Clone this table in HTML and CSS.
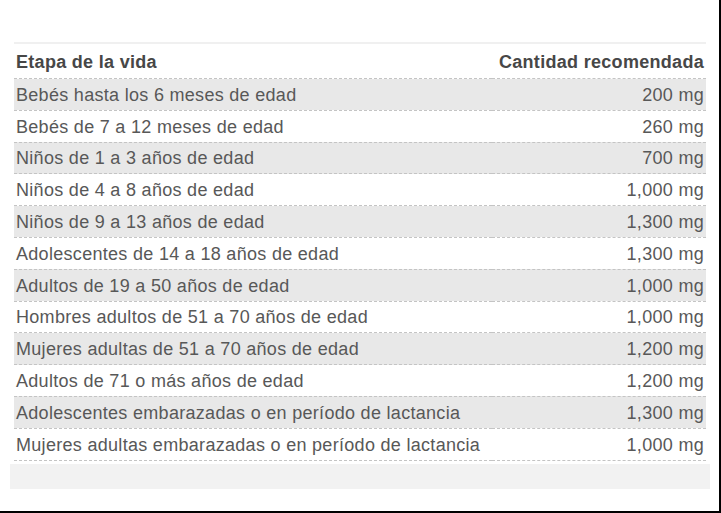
FILE: index.html
```html
<!DOCTYPE html>
<html lang="es">
<head>
<meta charset="utf-8">
<title>Cantidad recomendada</title>
<link rel="stylesheet" href="styles.css">
</head>
<body>
<div class="frame">
  <div class="content">
    <table class="intake">
      <thead>
        <tr><th class="stage">Etapa de la vida</th><th class="amount">Cantidad recomendada</th></tr>
      </thead>
      <tbody>
        <tr><td>Bebés hasta los 6 meses de edad</td><td class="amount">200 mg</td></tr>
        <tr><td>Bebés de 7 a 12 meses de edad</td><td class="amount">260 mg</td></tr>
        <tr><td>Niños de 1 a 3 años de edad</td><td class="amount">700 mg</td></tr>
        <tr><td>Niños de 4 a 8 años de edad</td><td class="amount">1,000 mg</td></tr>
        <tr><td>Niños de 9 a 13 años de edad</td><td class="amount">1,300 mg</td></tr>
        <tr><td>Adolescentes de 14 a 18 años de edad</td><td class="amount">1,300 mg</td></tr>
        <tr><td>Adultos de 19 a 50 años de edad</td><td class="amount">1,000 mg</td></tr>
        <tr><td>Hombres adultos de 51 a 70 años de edad</td><td class="amount">1,000 mg</td></tr>
        <tr><td>Mujeres adultas de 51 a 70 años de edad</td><td class="amount">1,200 mg</td></tr>
        <tr><td>Adultos de 71 o más años de edad</td><td class="amount">1,200 mg</td></tr>
        <tr><td>Adolescentes embarazadas o en período de lactancia</td><td class="amount">1,300 mg</td></tr>
        <tr><td>Mujeres adultas embarazadas o en período de lactancia</td><td class="amount">1,000 mg</td></tr>
      </tbody>
    </table>
    <div class="footer"></div>
  </div>
</div>
</body>
</html>
```
FILE: styles.css
```css
html, body {
  margin: 0;
  padding: 0;
  background: #ffffff;
}
.frame {
  width: 721px;
  height: 513px;
  box-sizing: border-box;
  border-right: 2px solid #000;
  border-bottom: 2px solid #000;
  overflow: hidden;
}
.content {
  padding: 42px 0 0 10px;
  width: 700px;
}
.intake {
  margin: 0 4px;
  width: 692px;
  border-collapse: collapse;
  border-top: 2px solid #f0f0f0;
  font-family: "Liberation Sans", Arial, sans-serif;
  font-size: 18px;
  letter-spacing: 0.3px;
  color: #585858;
}
.intake th {
  font-weight: bold;
  color: #474747;
  height: 32px;
  padding: 2px 2px 0;
  text-align: left;
  border-bottom: 1px dashed #c4c4c4;
}
.intake th.amount, .intake td.amount {
  text-align: right;
}
.intake td {
  height: 28.8px;
  padding: 2px 2px 0;
  border-bottom: 1px dashed #c4c4c4;
}
.intake tbody tr:nth-child(odd) td {
  background: #e8e8e8;
}
.footer {
  margin-top: 3px;
  height: 25px;
  background: #f2f2f2;
}
```
